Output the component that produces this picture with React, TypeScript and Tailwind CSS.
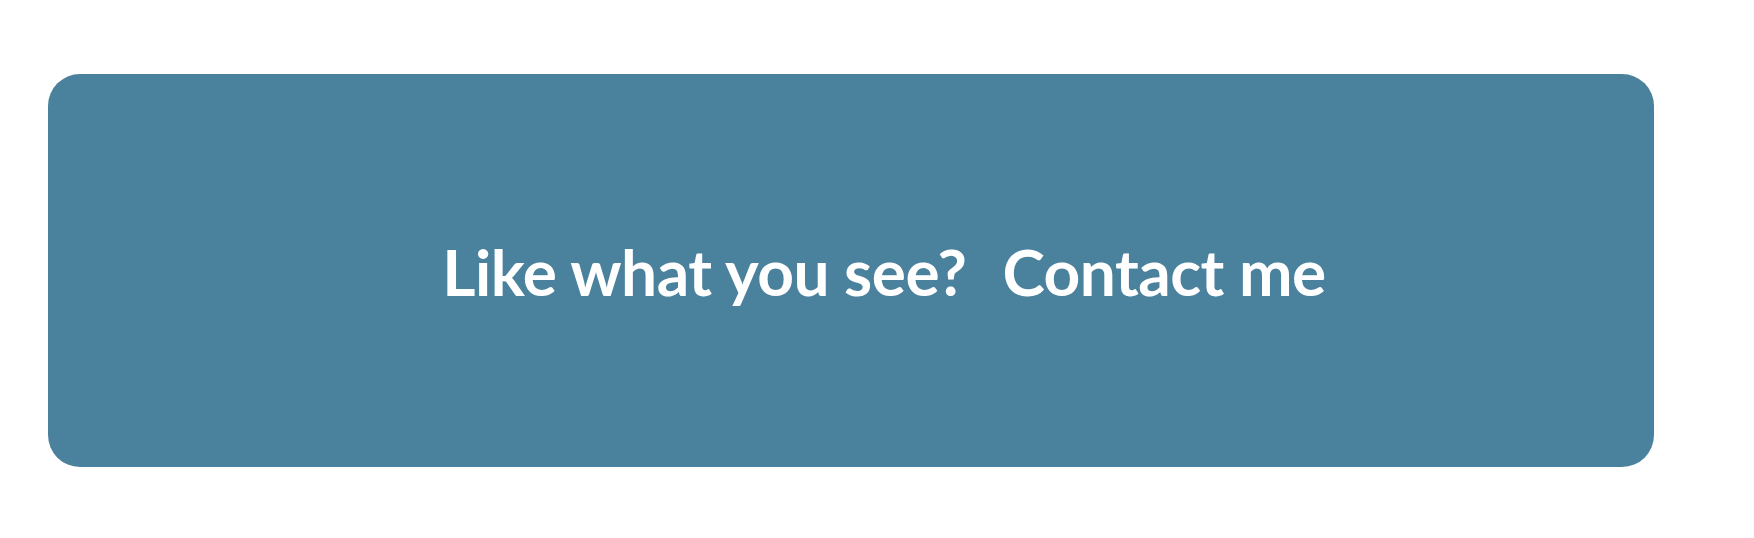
export default function App() {
  return (
    <div className="w-[1754px] h-[538px] bg-white pt-[74px] pl-[48px]">
      <div className="w-[1606px] h-[393px] rounded-[32px] bg-[#4a819c] flex items-center justify-center pl-[66px] pt-[2px]">
        <div className="flex items-baseline gap-[36px] text-white font-bold text-[64px] leading-none tracking-[-0.5px]" style={{ fontFamily: 'Lato, "Liberation Sans", sans-serif' }}>
          <span>Like what you see?</span>
          <span>Contact me</span>
        </div>
      </div>
    </div>
  );
}
